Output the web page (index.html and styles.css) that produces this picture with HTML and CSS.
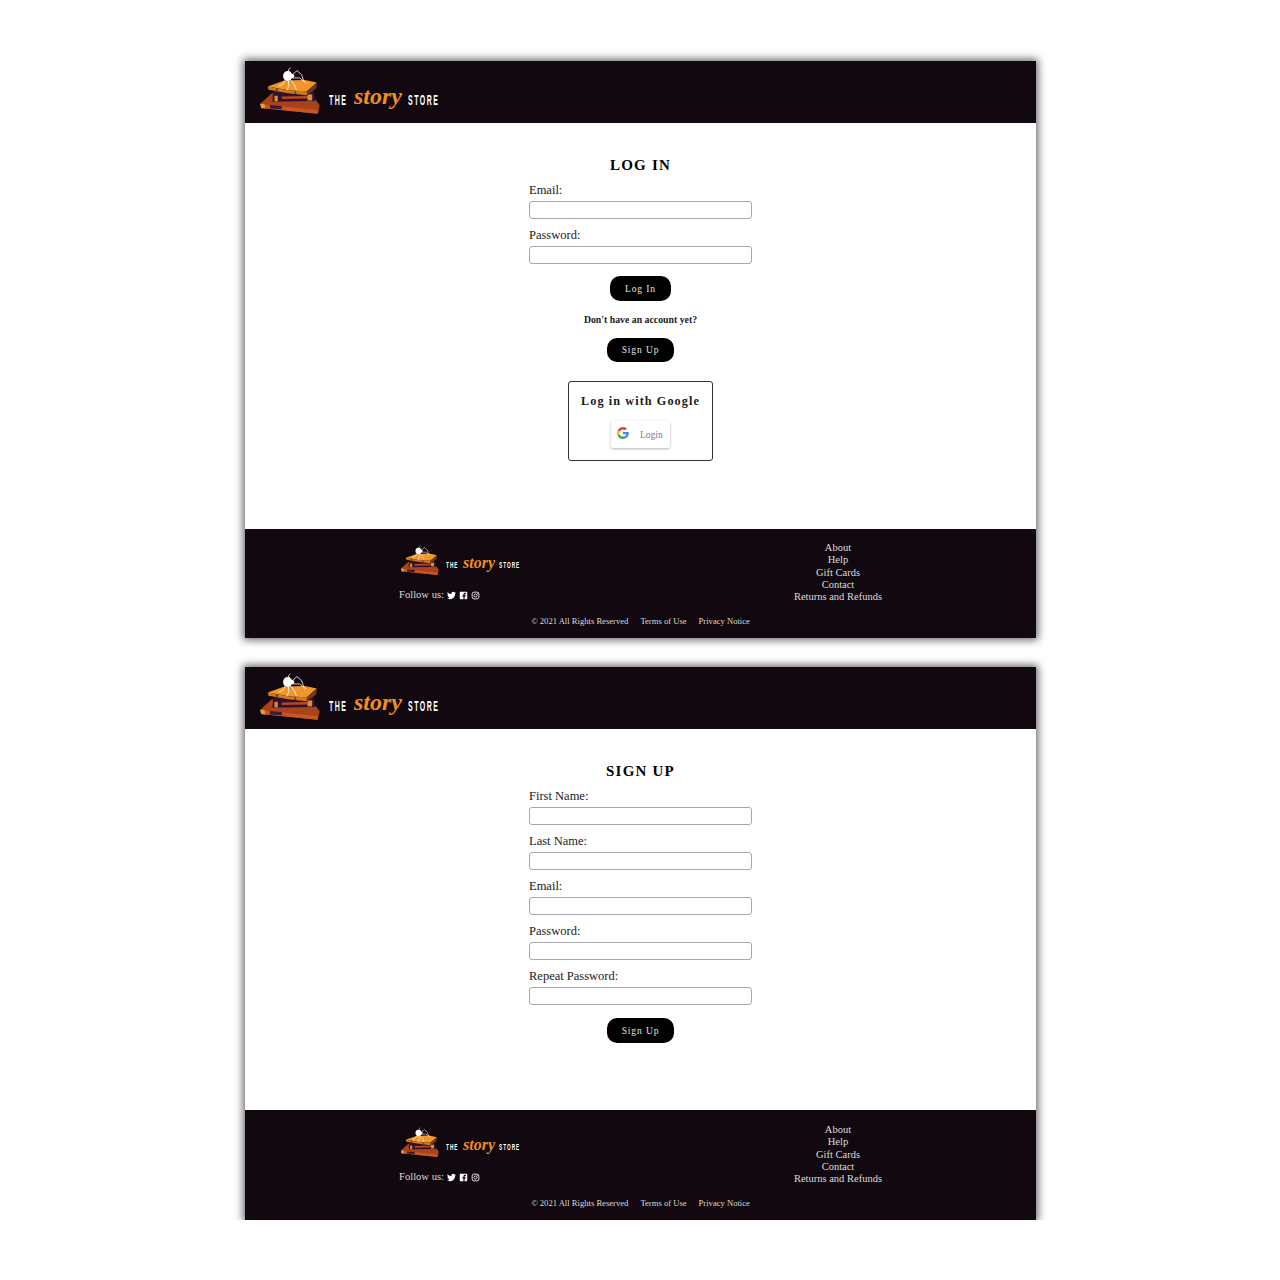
FILE: index.html
```html
<!DOCTYPE html>
<html lang="en">

<head>
    <meta charset="UTF-8">
    <title>The Story Store</title>
    <link rel="stylesheet" href="styles.css">
</head>

<body>
    <svg class="sprite" xmlns="http://www.w3.org/2000/svg">
        <symbol id="books" viewBox="15 15 195 145">
            <!-- bottom book -->
            <path d="M50 94 L15 126 L18 139 L188 156 L195 131 L178 108 Z" fill="#a8431c" />
            <path d="M15 126 L30 128 L190 146 L188 156 L18 139 Z" fill="#c9581f" />
            <path d="M15 126 L28 127 L30 140 L18 139 Z" fill="#e0a03a" />
            <path d="M44 130 L80 133 L80 143 L44 140 Z" fill="#3c1a3a" />
            <!-- middle book -->
            <path d="M54 88 L178 88 L182 118 L52 120 Z" fill="#2f1233" />
            <path d="M80 104 L172 102 L172 110 L80 112 Z" fill="#b5471b" />
            <path d="M58 102 L68 102 L68 119 L58 119 Z" fill="#d99030" />
            <path d="M158 98 L172 98 L172 116 L158 116 Z" fill="#d99030" />
            <!-- top book -->
            <path d="M38 74 L88 56 L150 54 L186 62 L156 88 L104 86 Z" fill="#f0962a" />
            <path d="M38 74 L104 86 L156 88 L156 100 L100 94 L40 84 Z" fill="#cf7a20" />
            <path d="M156 88 L186 62 L184 80 L156 100 Z" fill="#6a3a22" />
            <path d="M62 78 L68 79 L68 90 L62 89 Z M118 88 L124 88 L124 97 L118 96 Z" fill="#7c3d16" />
            <!-- spider -->
            <g fill="none" stroke="#fff" stroke-width="2.4" stroke-linecap="round" stroke-linejoin="round">
                <path d="M108 42 L100 24 L106 18" />
                <path d="M112 38 L126 26 L140 38 L146 56" />
                <path d="M112 48 L134 48 L152 62" />
                <path d="M106 54 L118 68 L124 84" />
                <path d="M100 58 L102 72 L96 84" />
                <path d="M90 56 L82 68 L72 72" />
            </g>
            <ellipse cx="98" cy="42" rx="14" ry="15" fill="#fff" />
            <circle cx="112" cy="42" r="6" fill="#fff" />
        </symbol>
        <symbol id="twitter" viewBox="0 0 24 24">
            <path fill="#fff" d="M23.953 4.57a10 10 0 01-2.825.775 4.958 4.958 0 002.163-2.723c-.951.555-2.005.959-3.127 1.184a4.92 4.92 0 00-8.384 4.482C7.69 8.095 4.067 6.13 1.64 3.162a4.822 4.822 0 00-.666 2.475c0 1.71.87 3.213 2.188 4.096a4.904 4.904 0 01-2.228-.616v.06a4.923 4.923 0 003.946 4.827 4.996 4.996 0 01-2.212.085 4.936 4.936 0 004.604 3.417 9.867 9.867 0 01-6.102 2.105c-.39 0-.779-.023-1.17-.067a13.995 13.995 0 007.557 2.209c9.053 0 13.998-7.496 13.998-13.985 0-.21 0-.42-.015-.63A9.935 9.935 0 0024 4.59z" />
        </symbol>
        <symbol id="facebook" viewBox="0 0 24 24">
            <path fill="#fff" fill-rule="evenodd" d="M4 2h16a2 2 0 012 2v16a2 2 0 01-2 2h-5v-7.5h2.8l.5-3.2H15V9.2c0-.9.4-1.5 1.6-1.5h1.8V4.9c-.5-.1-1.4-.2-2.4-.2-2.5 0-4.2 1.5-4.2 4.2v2.4H9v3.2h2.8V22H4a2 2 0 01-2-2V4a2 2 0 012-2z" />
        </symbol>
        <symbol id="instagram" viewBox="0 0 24 24">
            <rect x="3" y="3" width="18" height="18" rx="5" fill="none" stroke="#fff" stroke-width="2.2" />
            <circle cx="12" cy="12" r="4.2" fill="none" stroke="#fff" stroke-width="2.2" />
            <circle cx="17.2" cy="6.8" r="1.3" fill="#fff" />
        </symbol>
        <symbol id="google" viewBox="0 0 48 48">
            <path fill="#EA4335" d="M24 9.5c3.54 0 6.71 1.22 9.21 3.6l6.85-6.85C35.9 2.38 30.47 0 24 0 14.62 0 6.51 5.38 2.56 13.22l7.98 6.19C12.43 13.72 17.74 9.5 24 9.5z" />
            <path fill="#4285F4" d="M46.98 24.55c0-1.57-.15-3.09-.38-4.55H24v9.02h12.94c-.58 2.96-2.26 5.48-4.78 7.18l7.73 6c4.51-4.18 7.09-10.36 7.09-17.65z" />
            <path fill="#FBBC05" d="M10.53 28.59c-.48-1.45-.76-2.99-.76-4.59s.27-3.14.76-4.59l-7.98-6.19C.92 16.46 0 20.12 0 24c0 3.88.92 7.54 2.56 10.78l7.97-6.19z" />
            <path fill="#34A853" d="M24 48c6.48 0 11.93-2.13 15.89-5.81l-7.73-6c-2.15 1.45-4.92 2.3-8.16 2.3-6.26 0-11.57-4.22-13.47-9.91l-7.98 6.19C6.51 42.62 14.62 48 24 48z" />
        </symbol>
    </svg>

    <div class="pagina">
        <!-- log in -->
        <section class="tarjeta">
            <header class="cabecera">
                <a class="logo" href="#">
                    <svg class="logo-libros"><use href="#books" /></svg>
                    <span class="logo-the">THE</span>
                    <span class="logo-story">story</span>
                    <span class="logo-store">STORE</span>
                </a>
            </header>
            <main class="contenido">
                <h2 class="titulo">LOG IN</h2>
                <form class="formulario">
                    <label class="campo" for="email">Email:</label>
                    <input class="entrada" type="text" id="email">
                    <label class="campo" for="password">Password:</label>
                    <input class="entrada" type="password" id="password">
                </form>
                <button class="boton boton-login" type="button">Log In</button>
                <p class="aviso">Don't have an account yet?</p>
                <button class="boton boton-signup" type="button">Sign Up</button>
                <div class="caja-google">
                    <h3 class="caja-titulo">Log in with Google</h3>
                    <button class="boton-google" type="button">
                        <svg class="icono-google"><use href="#google" /></svg>
                        <span>Login</span>
                    </button>
                </div>
            </main>
            <footer class="pie">
                <div class="pie-arriba">
                    <div class="pie-marca">
                        <a class="logo logo-pie" href="#">
                            <svg class="logo-libros"><use href="#books" /></svg>
                            <span class="logo-the">THE</span>
                            <span class="logo-story">story</span>
                            <span class="logo-store">STORE</span>
                        </a>
                        <div class="redes">
                            <span>Follow us:</span>
                            <svg class="red"><use href="#twitter" /></svg>
                            <svg class="red"><use href="#facebook" /></svg>
                            <svg class="red"><use href="#instagram" /></svg>
                        </div>
                    </div>
                    <nav class="pie-enlaces">
                        <a href="#">About</a>
                        <a href="#">Help</a>
                        <a href="#">Gift Cards</a>
                        <a href="#">Contact</a>
                        <a href="#">Returns and Refunds</a>
                    </nav>
                </div>
                <div class="pie-abajo">
                    <span>© 2021 All Rights Reserved</span>
                    <a href="#">Terms of Use</a>
                    <a href="#">Privacy Notice</a>
                </div>
            </footer>
        </section>

        <!-- sign up -->
        <section class="tarjeta">
            <header class="cabecera">
                <a class="logo" href="#">
                    <svg class="logo-libros"><use href="#books" /></svg>
                    <span class="logo-the">THE</span>
                    <span class="logo-story">story</span>
                    <span class="logo-store">STORE</span>
                </a>
            </header>
            <main class="contenido">
                <h2 class="titulo">SIGN UP</h2>
                <form class="formulario">
                    <label class="campo" for="nombre">First Name:</label>
                    <input class="entrada" type="text" id="nombre">
                    <label class="campo" for="apellido">Last Name:</label>
                    <input class="entrada" type="text" id="apellido">
                    <label class="campo" for="email2">Email:</label>
                    <input class="entrada" type="text" id="email2">
                    <label class="campo" for="password2">Password:</label>
                    <input class="entrada" type="password" id="password2">
                    <label class="campo" for="repetir">Repeat Password:</label>
                    <input class="entrada" type="password" id="repetir">
                </form>
                <button class="boton boton-signup" type="button">Sign Up</button>
            </main>
            <footer class="pie pie-alto">
                <div class="pie-arriba">
                    <div class="pie-marca">
                        <a class="logo logo-pie" href="#">
                            <svg class="logo-libros"><use href="#books" /></svg>
                            <span class="logo-the">THE</span>
                            <span class="logo-story">story</span>
                            <span class="logo-store">STORE</span>
                        </a>
                        <div class="redes">
                            <span>Follow us:</span>
                            <svg class="red"><use href="#twitter" /></svg>
                            <svg class="red"><use href="#facebook" /></svg>
                            <svg class="red"><use href="#instagram" /></svg>
                        </div>
                    </div>
                    <nav class="pie-enlaces">
                        <a href="#">About</a>
                        <a href="#">Help</a>
                        <a href="#">Gift Cards</a>
                        <a href="#">Contact</a>
                        <a href="#">Returns and Refunds</a>
                    </nav>
                </div>
                <div class="pie-abajo">
                    <span>© 2021 All Rights Reserved</span>
                    <a href="#">Terms of Use</a>
                    <a href="#">Privacy Notice</a>
                </div>
            </footer>
        </section>
    </div>
</body>

</html>
```

FILE: styles.css
```css
body {
    margin: 0;
    background-color: white;
    font-family: "Liberation Serif", serif;
    color: #1a1a1a;
}

a {
    color: inherit;
    text-decoration: none;
}

.sprite {
    display: none;
}

.pagina {
    display: flex;
    flex-direction: column;
    gap: 29px;
    width: 791px;
    margin-left: 245px;
    padding-top: 61px;
}

.tarjeta {
    display: flex;
    flex-direction: column;
    background-color: white;
    box-shadow: 0 0 8px 2px rgba(0, 0, 0, 0.6);
}

/* cabecera y logo */
.cabecera {
    display: flex;
    align-items: flex-start;
    height: 62px;
    padding: 6px 0 0 15px;
    box-sizing: border-box;
    background-color: #12080f;
}

.logo {
    display: flex;
    align-items: center;
    height: 48px;
    color: white;
    line-height: 1;
}

.logo-libros {
    width: 65px;
    height: 48px;
    margin-right: 4px;
}

/* letras estrechas: se comprime la fuente porque no hay version condensada */
.logo-the,
.logo-store {
    margin-top: 17px;
    font-family: "Liberation Sans", sans-serif;
    font-size: 14px;
    font-weight: bold;
    letter-spacing: 3px;
    white-space: nowrap;
    transform: scaleX(0.5);
    transform-origin: left center;
}

.logo-the {
    width: 18px;
}

.logo-store {
    width: 32px;
}

.logo-story {
    width: 48px;
    margin: 10px 6px 0 7px;
    font-family: "Liberation Serif", serif;
    font-style: italic;
    font-weight: bold;
    font-size: 24px;
    color: #ee8f21;
    white-space: nowrap;
}

.logo-pie {
    height: 32px;
    margin-left: 2px;
}

.logo-pie .logo-libros {
    width: 41px;
    height: 31px;
    margin-right: 4px;
}

.logo-pie .logo-the,
.logo-pie .logo-store {
    margin-top: 9px;
    font-size: 9.5px;
    letter-spacing: 2px;
}

.logo-pie .logo-the {
    width: 13px;
}

.logo-pie .logo-store {
    width: 22px;
}

.logo-pie .logo-story {
    width: 32px;
    margin: 5px 4px 0 4px;
    font-size: 16px;
}

/* formularios */
.contenido {
    display: flex;
    flex-direction: column;
    align-items: center;
    padding: 32px 0 67px;
}

.titulo {
    margin: 0;
    font-size: 15px;
    line-height: 20px;
    letter-spacing: 1.2px;
    color: black;
}

.formulario {
    display: flex;
    flex-direction: column;
    width: 223px;
    margin-top: 7px;
}

.campo {
    font-size: 12.5px;
    line-height: 17px;
    margin-bottom: 2px;
}

.entrada {
    box-sizing: border-box;
    height: 18px;
    margin: 0 0 8px;
    padding: 0 4px;
    border: 1px solid #a8a8b4;
    border-radius: 3px;
    background-color: white;
}

.boton {
    padding: 0;
    border: 0;
    border-radius: 10px;
    background-color: black;
    color: #e4e4e4;
    font-family: "Liberation Serif", serif;
    font-size: 9.5px;
    letter-spacing: 0.9px;
}

.boton-login {
    width: 61px;
    height: 25px;
}

.boton-signup {
    width: 67px;
    height: 24px;
}

.formulario + .boton-login {
    margin-top: 4px;
}

.formulario + .boton-signup {
    height: 25px;
    margin-top: 5px;
}

.aviso {
    margin: 13px 0 12px;
    font-size: 9.8px;
    line-height: 12px;
    font-weight: bold;
}

.caja-google {
    display: flex;
    flex-direction: column;
    align-items: center;
    box-sizing: border-box;
    width: 145px;
    height: 80px;
    margin: 19px 0 1px;
    padding-top: 11px;
    border: 1px solid #333;
    border-radius: 3px;
}

.caja-titulo {
    margin: 0;
    font-size: 12.2px;
    line-height: 16px;
    letter-spacing: 1.1px;
}

.boton-google {
    display: flex;
    align-items: center;
    gap: 11px;
    box-sizing: border-box;
    width: 59px;
    height: 27px;
    margin-top: 12px;
    padding: 0 0 0 6px;
    border: 0;
    border-radius: 2px;
    background-color: white;
    box-shadow: 0 1px 3px rgba(0, 0, 0, 0.3);
    color: #7d7d7d;
    font-family: "Liberation Serif", serif;
    font-size: 9.5px;
}

.icono-google {
    width: 12px;
    height: 12px;
    margin-bottom: 3px;
}

/* pie */
.pie {
    display: flex;
    flex-direction: column;
    height: 109px;
    box-sizing: border-box;
    padding-top: 13px;
    background-color: #12080f;
    color: #dcdcdc;
}

.pie-alto {
    height: 110px;
    padding-top: 14px;
}

.pie-arriba {
    display: flex;
    justify-content: space-between;
    padding: 0 154px;
}

.pie-marca {
    display: flex;
    flex-direction: column;
    padding-top: 2px;
}

.redes {
    display: flex;
    align-items: center;
    gap: 3px;
    margin-top: 12px;
    font-size: 10.6px;
    line-height: 14px;
}

.red {
    width: 9px;
    height: 9px;
}

.pie-enlaces {
    display: flex;
    flex-direction: column;
    align-items: center;
    font-size: 10.5px;
    line-height: 12.3px;
}

.pie-abajo {
    display: flex;
    justify-content: center;
    gap: 12px;
    margin-top: 12px;
    font-size: 8.6px;
    line-height: 12px;
}
```
